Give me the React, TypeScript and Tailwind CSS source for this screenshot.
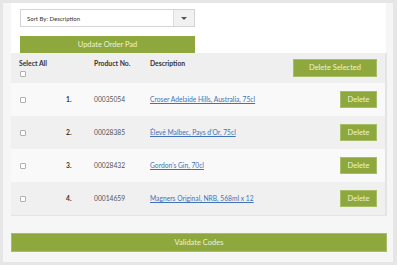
import React from 'react';

type Item = { no: string; code: string; desc: string };

const ITEMS: Item[] = [
  { no: '1.', code: '00035054', desc: 'Croser Adelaide Hills, Australia, 75cl' },
  { no: '2.', code: '00028385', desc: 'Élevé Malbec, Pays d’Or, 75cl' },
  { no: '3.', code: '00028432', desc: 'Gordon’s Gin, 70cl' },
  { no: '4.', code: '00014659', desc: 'Magners Original, NRB, 568ml x 12' },
];

const Check: React.FC = () => (
  <input
    type="checkbox"
    className="appearance-none block w-[6px] h-[6px] bg-white border border-[#b0b0b0] rounded-[1px] m-0"
  />
);

const App: React.FC = () => {
  return (
    <div
      className="w-[397px] h-[265px] bg-[#e6e6e6] pt-[3px] pl-[3px] pr-[4px] pb-[3px]"
      style={{ fontFamily: 'Lato, "Open Sans", sans-serif' }}
    >
      <div className="h-[259px] bg-[#f6f6f6] px-[8px] flex flex-col">
        <div className="w-[375px] h-[50px] bg-white pl-[9px] pt-[6px] flex flex-col gap-[9px]">
          <div className="w-[175px] h-[18px] border border-[#d4d4d4] bg-white flex items-center">
            <span className="flex-1 pl-[6px] text-[6px] text-[#333]">Sort By: Description</span>
            <div className="w-[21px] h-full bg-[#f1f1f1] border-l border-[#dcdcdc] flex items-center justify-center">
              <svg width="6" height="3" viewBox="0 0 6 3">
                <path d="M0 0 L6 0 L3 3 Z" fill="#555" />
              </svg>
            </div>
          </div>
          <button className="w-[175px] h-[17px] bg-[#8ea83d] text-[#eef2dc] text-[7.5px] flex items-center justify-center">
            Update Order Pad
          </button>
        </div>

        <div className="w-[376px] border-r-[2px] border-b-[1px] border-[#e4e4e4]">
          <div className="h-[30px] bg-[#efefef] flex items-start text-[6.8px] font-bold text-[#333]">
            <div className="w-[54px] pl-[8px] pt-[6px] flex flex-col gap-[3px]">
              <span className="leading-[9px]">Select All</span>
              <div className="pl-[1px]">
                <Check />
              </div>
            </div>
            <div className="w-[29px]" />
            <span className="w-[56px] pt-[6px] leading-[9px]">Product No.</span>
            <span className="flex-1 pt-[6px] leading-[9px]">Description</span>
            <div className="pr-[8px] pt-[6px]">
              <button className="w-[84px] h-[18px] bg-[#8ea83d] border border-[#a9bc68] text-[#eef2dc] font-normal text-[7.5px] flex items-center justify-center">
                Delete Selected
              </button>
            </div>
          </div>
          {ITEMS.map((item, i) => (
            <div
              key={item.code}
              className={`h-[33px] flex items-center text-[6.7px] ${i % 2 === 0 ? 'bg-[#f9f9f9]' : 'bg-[#f0f0f0]'}`}
            >
              <div className="w-[55px] pl-[9px]">
                <Check />
              </div>
              <span className="w-[28px] font-bold text-[#333]">{item.no}</span>
              <span className="w-[56px] text-[#555]">{item.code}</span>
              <a href="#" className="flex-1 text-[#3f72b8] underline">
                {item.desc}
              </a>
              <div className="pr-[8px]">
                <button className="w-[37px] h-[17px] bg-[#8ea83d] border border-[#a9bc68] text-[#eef2dc] text-[7.5px] flex items-center justify-center">
                  Delete
                </button>
              </div>
            </div>
          ))}
        </div>

        <button className="mt-[17px] w-[376px] h-[19px] bg-[#8ea83d] border border-[#a9bc68] text-[#eef2dc] text-[7.5px] flex items-center justify-center">
          Validate Codes
        </button>
      </div>
    </div>
  );
};

export default App;
